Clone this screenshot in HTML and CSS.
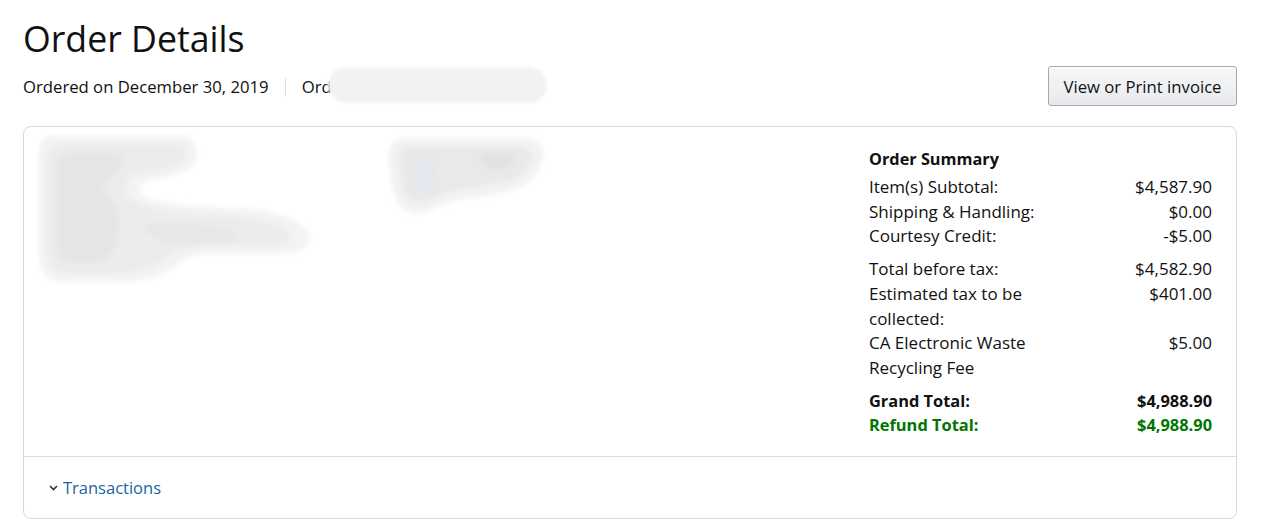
FILE: index.html
```html
<!DOCTYPE html>
<html lang="en">
<head>
<meta charset="utf-8">
<title>Order Details</title>
<link rel="stylesheet" href="styles.css">
</head>
<body>
<div class="page">
  <h1 class="title">Order Details</h1>
  <div class="meta-row">
    <div class="meta">
      <span class="meta-date">Ordered on December 30, 2019</span>
      <span class="meta-sep"></span>
      <span class="meta-order">Order# 112-0000000-0000000
        <span class="redact-line"></span>
      </span>
    </div>
    <button class="btn">View or Print invoice</button>
  </div>

  <div class="card">
    <div class="card-main">
      <div class="addresses">
        <svg class="blob blob-a" width="280" height="152" viewBox="0 0 280 152" aria-hidden="true">
          <defs>
            <filter id="soft" x="-20%" y="-20%" width="140%" height="140%"><feGaussianBlur stdDeviation="2.5"/></filter>
          </defs>
          <path filter="url(#soft)" fill="#f3f3f3" d="M18 2 H150 Q162 4 162 24 Q160 40 115 46 Q100 52 108 62 Q120 72 205 74 Q240 76 262 88 Q276 96 274 108 Q270 120 235 120 H170 Q150 122 140 132 Q120 148 80 148 H30 Q4 148 4 120 V20 Q4 2 18 2 Z"/>
          <path filter="url(#soft)" fill="#ececec" d="M26 10 H148 Q154 16 148 28 Q130 38 100 40 Q86 48 92 62 Q110 80 200 82 Q240 86 255 100 Q260 110 240 112 H168 Q140 114 128 126 Q110 140 78 140 H34 Q12 140 12 116 V26 Q12 10 26 10 Z"/>
          <path filter="url(#soft)" fill="#e5e5e5" d="M32 20 H80 Q94 24 84 36 Q64 52 70 60 Q86 70 84 96 Q80 126 60 128 H34 Q22 128 22 112 V36 Q22 20 32 20 Z"/>
          <path filter="url(#soft)" fill="#e7e7e7" d="M110 90 Q150 86 190 94 Q210 102 200 108 Q160 112 130 108 Q108 100 110 90 Z"/>
        </svg>
        <svg class="blob blob-b" width="165" height="85" viewBox="0 0 165 85" aria-hidden="true">
          <path filter="url(#soft)" fill="#f2f2f2" d="M16 4 H140 Q160 6 158 22 Q154 42 138 52 Q116 60 84 64 Q62 68 40 78 Q16 82 10 62 Q4 40 4 20 Q6 6 16 4 Z"/>
          <path filter="url(#soft)" fill="#e9e9e9" d="M22 12 H134 Q148 14 146 26 Q142 40 126 46 Q104 52 80 54 Q56 60 40 68 Q22 70 18 54 Q14 38 14 24 Q16 12 22 12 Z"/>
          <path filter="url(#soft)" fill="#e3e8ee" d="M28 24 Q40 20 50 30 Q54 44 44 58 Q32 62 28 50 Z"/>
          <path filter="url(#soft)" fill="#e2e2e2" d="M96 20 Q120 16 130 24 Q128 34 110 36 Q94 32 96 20 Z"/>
        </svg>
      </div>
      <div class="summary">
        <h2 class="summary-title">Order Summary</h2>
        <div class="sum-group">
          <div class="sum-row"><span class="sum-label">Item(s) Subtotal:</span><span class="sum-value">$4,587.90</span></div>
          <div class="sum-row"><span class="sum-label">Shipping &amp; Handling:</span><span class="sum-value">$0.00</span></div>
          <div class="sum-row"><span class="sum-label">Courtesy Credit:</span><span class="sum-value">-$5.00</span></div>
        </div>
        <div class="sum-group">
          <div class="sum-row"><span class="sum-label">Total before tax:</span><span class="sum-value">$4,582.90</span></div>
          <div class="sum-row"><span class="sum-label">Estimated tax to be collected:</span><span class="sum-value">$401.00</span></div>
          <div class="sum-row"><span class="sum-label">CA Electronic Waste Recycling Fee</span><span class="sum-value">$5.00</span></div>
        </div>
        <div class="sum-group sum-group-total">
          <div class="sum-row strong"><span class="sum-label">Grand Total:</span><span class="sum-value">$4,988.90</span></div>
          <div class="sum-row strong refund"><span class="sum-label">Refund Total:</span><span class="sum-value">$4,988.90</span></div>
        </div>
      </div>
    </div>
    <div class="card-foot">
      <a class="expander" href="#">
        <svg class="chev" width="9" height="6" viewBox="0 0 9 6" aria-hidden="true"><path d="M1 1 L4.5 4.5 L8 1" fill="none" stroke="#333" stroke-width="1.6"/></svg>
        <span>Transactions</span>
      </a>
    </div>
  </div>
</div>
</body>
</html>
```

FILE: styles.css
```css
* { box-sizing: border-box; }

html, body {
  margin: 0;
  background: #fff;
}

body {
  font-family: "Open Sans", "Noto Sans", sans-serif;
  color: #111;
}

.page {
  padding: 12px 43px 0 23px;
}

.title {
  margin: 0;
  font-weight: 400;
  font-size: 35.7px;
  line-height: 52px;
}

.meta-row {
  display: flex;
  justify-content: space-between;
  align-items: center;
  margin-top: 2px;
}

.meta {
  display: flex;
  align-items: center;
  font-size: 16.7px;
  line-height: 24px;
  margin-top: 2px;
}

.meta-sep {
  width: 1px;
  height: 19px;
  background: #ddd;
  margin: 0 16px;
}

.meta-order {
  position: relative;
}

.redact-line {
  position: absolute;
  left: 28px;
  top: -6px;
  width: 215px;
  height: 32px;
  border-radius: 16px;
  background: #f2f2f2;
  box-shadow: 0 0 3px 2px #f4f4f4;
}

.btn {
  font-family: inherit;
  font-size: 16.7px;
  color: #111;
  height: 40px;
  padding: 0 14.5px;
  border: 1px solid #a6a8ac;
  border-radius: 3px;
  background: linear-gradient(#f7f8fa, #e7e9ec);
  box-shadow: 0 1px 0 rgba(255,255,255,.6) inset;
}

.card {
  margin-top: 20px;
  border: 1px solid #d9d9d9;
  border-radius: 8px;
}

.card-main {
  display: flex;
  justify-content: space-between;
  padding: 7px 24px 18px 11px;
  border-bottom: 1px solid #ddd;
}

.addresses {
  display: flex;
  align-items: flex-start;
}

.blob-b {
  margin-left: 70px;
}

.summary {
  width: 343px;
  padding-top: 13px;
  font-size: 17px;
  line-height: 24.7px;
}

.summary-title {
  margin: 0 0 4px 0;
  font-size: 16.3px;
  font-weight: 700;
  line-height: 24px;
}

.sum-group + .sum-group {
  margin-top: 8px;
}

.sum-group + .sum-group-total {
  margin-top: 8px;
}

.sum-row {
  display: flex;
  justify-content: space-between;
  align-items: flex-start;
}

.sum-label {
  width: 175px;
}

.sum-value {
  text-align: right;
}

.strong {
  font-weight: 700;
  font-size: 16.4px;
}

.refund {
  color: #007600;
}

.card-foot {
  padding: 17px 24px 18px 24px;
}

.expander {
  display: inline-flex;
  align-items: center;
  gap: 5px;
  color: #1765a1;
  text-decoration: none;
  font-size: 16.5px;
  line-height: 24px;
}

.chev {
  margin-left: 1px;
}
```
